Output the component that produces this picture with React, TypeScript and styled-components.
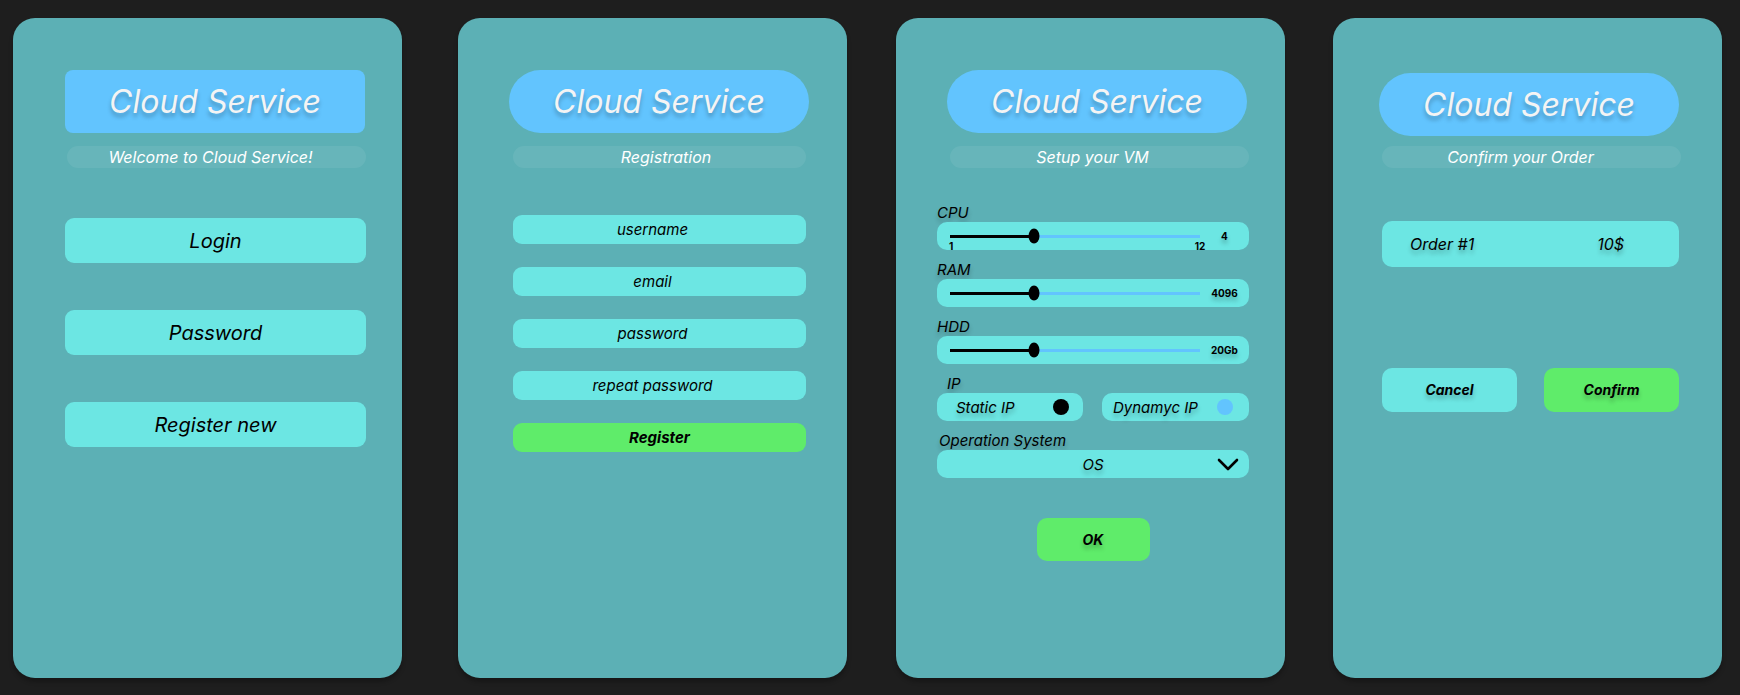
import styled, { createGlobalStyle } from 'styled-components'

const GlobalStyle = createGlobalStyle`
  html, body {
    margin: 0;
    padding: 0;
    background: #1e1e1e;
  }
  body {
    font-family: Inter, 'Noto Sans', sans-serif;
  }
  * {
    box-sizing: border-box;
  }
`

const shadow = '0 4px 4px rgba(0, 0, 0, 0.25)'
const cyan = '#6ce6e3'
const green = '#5fec6a'
const sky = '#62c4fe'

const Board = styled('main')`
  display: flex;
  align-items: flex-start;
  width: 1740px;
  height: 695px;
  padding: 18px 0 0 13px;
  overflow: hidden;
`
const Panel = styled('section')<{ $offset: number, $pad: number, $top?: number }>`
  display: flex;
  flex-direction: column;
  align-items: flex-start;
  flex: none;
  width: 389px;
  height: 660px;
  margin-left: ${p => p.$offset}px;
  padding: ${p => p.$top ?? 52}px 0 0 ${p => p.$pad}px;
  background: #5cb0b5;
  border-radius: 22px;
  box-shadow: ${shadow};
`
const Header = styled('header')<{ $indent?: number }>`
  display: flex;
  flex-direction: column;
  margin-left: ${p => p.$indent ?? 0}px;
`
const Title = styled('h1')<{ $pill?: boolean }>`
  display: flex;
  align-items: center;
  justify-content: center;
  width: 300px;
  height: 63px;
  margin: 0;
  background: ${sky};
  border-radius: ${p => p.$pill ? '32px' : '8px'};
  color: #f4f4f4;
  font: italic 400 32px/1 Inter, sans-serif;
  text-shadow: ${shadow};
`
const Subtitle = styled('p')<{ $gap?: number, $shift: number, $width?: number, $nudge?: number }>`
  width: ${p => p.$width ?? 299}px;
  height: 22px;
  margin: ${p => p.$gap ?? 13}px 0 0 ${p => p.$shift}px;
  padding: 0 ${p => p.$nudge && p.$nudge > 0 ? p.$nudge : 0}px 0 ${p => p.$nudge && p.$nudge < 0 ? -p.$nudge : 0}px;
  background: rgba(255, 255, 255, 0.07);
  border-radius: 11px;
  color: #fff;
  font: italic 400 16px/22px Inter, sans-serif;
  text-align: center;
`

/* login */
const MenuList = styled('nav')`
  display: flex;
  flex-direction: column;
  gap: 47px;
  margin-top: 50px;
`
const MenuButton = styled('button')`
  width: 301px;
  height: 45px;
  border: 0;
  border-radius: 9px;
  background: ${cyan};
  color: #000;
  font: italic 400 20px/1 Inter, sans-serif;
`

/* registration */
const Form = styled('form')`
  display: flex;
  flex-direction: column;
  gap: 23px;
  margin: 47px 0 0 4px;
`
const Input = styled('div')`
  width: 293px;
  height: 29px;
  padding-right: 14px;
  border-radius: 9px;
  background: ${cyan};
  color: #000;
  font: italic 400 15px/29px Inter, sans-serif;
  text-align: center;
`
const SubmitButton = styled('button')`
  width: 293px;
  height: 29px;
  border: 0;
  border-radius: 9px;
  background: ${green};
  color: #000;
  font: italic 700 15px/1 Inter, sans-serif;
`

/* vm setup */
const Fields = styled('div')`
  display: flex;
  flex-direction: column;
  gap: 11px;
  width: 312px;
  margin-top: 36px;
`
const Field = styled('div')`
  display: flex;
  flex-direction: column;
`
const FieldLabel = styled('span')<{ $indent?: number }>`
  height: 18px;
  padding-left: ${p => p.$indent ?? 0}px;
  color: #000;
  font: italic 400 15px/18px Inter, sans-serif;
  text-shadow: ${shadow};
`
const SliderBox = styled('div')`
  display: flex;
  align-items: center;
  height: 28px;
  padding-left: 13px;
  border-radius: 10px;
  background: ${cyan};
`
const Track = styled('div')`
  position: relative;
  flex: none;
  width: 250px;
  height: 3px;
  background: ${sky};
`
const TrackFill = styled('div')`
  position: absolute;
  left: 0;
  top: 0;
  height: 3px;
  background: #000;
`
const Thumb = styled('div')`
  position: absolute;
  top: 50%;
  width: 11px;
  height: 15px;
  border-radius: 50%;
  background: #000;
  transform: translate(-50%, -50%);
`
const Tick = styled('span')<{ $at: 'start' | 'end' }>`
  position: absolute;
  top: 6px;
  ${p => p.$at === 'start' ? 'left: -1px;' : 'right: 0; transform: translateX(50%);'}
  color: #000;
  font: 700 10px/10px Inter, sans-serif;
`
const SliderValue = styled('span')`
  flex: 1;
  color: #000;
  font: 700 10px/1 Inter, sans-serif;
  text-align: center;
  text-shadow: ${shadow};
`
const RadioRow = styled('div')`
  display: grid;
  grid-template-columns: 146px 147px;
  gap: 19px;
`
const RadioBox = styled('label')<{ $padL: number, $padR: number }>`
  display: flex;
  align-items: center;
  justify-content: space-between;
  height: 28px;
  padding: 0 ${p => p.$padR}px 0 ${p => p.$padL}px;
  border-radius: 10px;
  background: ${cyan};
  color: #000;
  font: italic 400 15px/1 Inter, sans-serif;
  text-shadow: ${shadow};
`
const Dot = styled('span')<{ $on: boolean }>`
  width: 16px;
  height: 16px;
  border-radius: 50%;
  background: ${p => p.$on ? '#000' : sky};
`
const Select = styled('div')`
  display: grid;
  grid-template-columns: 1fr auto 1fr;
  align-items: center;
  height: 28px;
  padding: 0 10px;
  border-radius: 10px;
  background: ${cyan};
  color: #000;
  font: italic 400 15px/1 Inter, sans-serif;
  text-shadow: ${shadow};

  svg {
    justify-self: end;
  }
`
const OkButton = styled('button')`
  align-self: center;
  width: 113px;
  height: 43px;
  margin-top: 29px;
  border: 0;
  border-radius: 10px;
  background: ${green};
  color: #000;
  font: italic 700 14px/1 Inter, sans-serif;
  text-shadow: ${shadow};
`

/* confirm */
const OrderRow = styled('div')`
  display: flex;
  align-items: center;
  justify-content: space-between;
  width: 297px;
  height: 46px;
  margin: 53px 0 0 3px;
  padding: 0 55px 0 28px;
  border-radius: 10px;
  background: ${cyan};
  color: #000;
  font: italic 400 16px/1 Inter, sans-serif;
  text-shadow: ${shadow};
`
const Actions = styled('div')`
  display: grid;
  grid-template-columns: 1fr 1fr;
  gap: 27px;
  width: 297px;
  margin: 101px 0 0 3px;
`
const ActionButton = styled('button')<{ $primary?: boolean }>`
  height: 44px;
  border: 0;
  border-radius: 10px;
  background: ${p => p.$primary ? green : cyan};
  color: #000;
  font: italic 700 14px/1 Inter, sans-serif;
  text-shadow: ${shadow};
`

interface Slider {
  label: string
  fill: number
  value: string
  ticks?: [string, string]
}

const sliders: Slider[] = [
  { label: 'CPU', fill: 84, value: '4', ticks: ['1', '12'] },
  { label: 'RAM', fill: 84, value: '4096' },
  { label: 'HDD', fill: 84, value: '20Gb' }
]

const Chevron = (): JSX.Element => (
  <svg width='22' height='13' viewBox='0 0 22 13' fill='none'>
    <path d='M2 2 L11 11 L20 2' stroke='#000' strokeWidth='2.6' strokeLinecap='round' strokeLinejoin='round' />
  </svg>
)

const App = (): JSX.Element => (
  <>
    <GlobalStyle />
    <Board>
      <Panel $offset={0} $pad={52}>
        <Header>
          <Title>Cloud Service</Title>
          <Subtitle $shift={2} $nudge={12}>Welcome to Cloud Service!</Subtitle>
        </Header>
        <MenuList>
          <MenuButton>Login</MenuButton>
          <MenuButton>Password</MenuButton>
          <MenuButton>Register new</MenuButton>
        </MenuList>
      </Panel>

      <Panel $offset={56} $pad={51}>
        <Header>
          <Title $pill>Cloud Service</Title>
          <Subtitle $shift={4} $width={293} $nudge={-13}>Registration</Subtitle>
        </Header>
        <Form>
          <Input>username</Input>
          <Input>email</Input>
          <Input>password</Input>
          <Input>repeat password</Input>
          <SubmitButton type='button'>Register</SubmitButton>
        </Form>
      </Panel>

      <Panel $offset={49} $pad={41}>
        <Header $indent={10}>
          <Title $pill>Cloud Service</Title>
          <Subtitle $shift={3} $nudge={14}>Setup your VM</Subtitle>
        </Header>
        <Fields>
          {sliders.map((s) => (
            <Field key={s.label}>
              <FieldLabel>{s.label}</FieldLabel>
              <SliderBox>
                <Track>
                  <TrackFill style={{ width: s.fill }} />
                  <Thumb style={{ left: s.fill }} />
                  {s.ticks && <Tick $at='start'>{s.ticks[0]}</Tick>}
                  {s.ticks && <Tick $at='end'>{s.ticks[1]}</Tick>}
                </Track>
                <SliderValue>{s.value}</SliderValue>
              </SliderBox>
            </Field>
          ))}
          <Field>
            <FieldLabel $indent={10}>IP</FieldLabel>
            <RadioRow>
              <RadioBox $padL={19} $padR={14}>Static IP<Dot $on /></RadioBox>
              <RadioBox $padL={11} $padR={16}>Dynamyc IP<Dot $on={false} /></RadioBox>
            </RadioRow>
          </Field>
          <Field>
            <FieldLabel $indent={2}>Operation System</FieldLabel>
            <Select>
              <span />
              <span>OS</span>
              <Chevron />
            </Select>
          </Field>
          <OkButton>OK</OkButton>
        </Fields>
      </Panel>

      <Panel $offset={48} $pad={46} $top={55}>
        <Header>
          <Title $pill>Cloud Service</Title>
          <Subtitle $shift={3} $gap={10} $nudge={22}>Confirm your Order</Subtitle>
        </Header>
        <OrderRow>
          <span>Order #1</span>
          <span>10$</span>
        </OrderRow>
        <Actions>
          <ActionButton>Cancel</ActionButton>
          <ActionButton $primary>Confirm</ActionButton>
        </Actions>
      </Panel>
    </Board>
  </>
)

export default App
